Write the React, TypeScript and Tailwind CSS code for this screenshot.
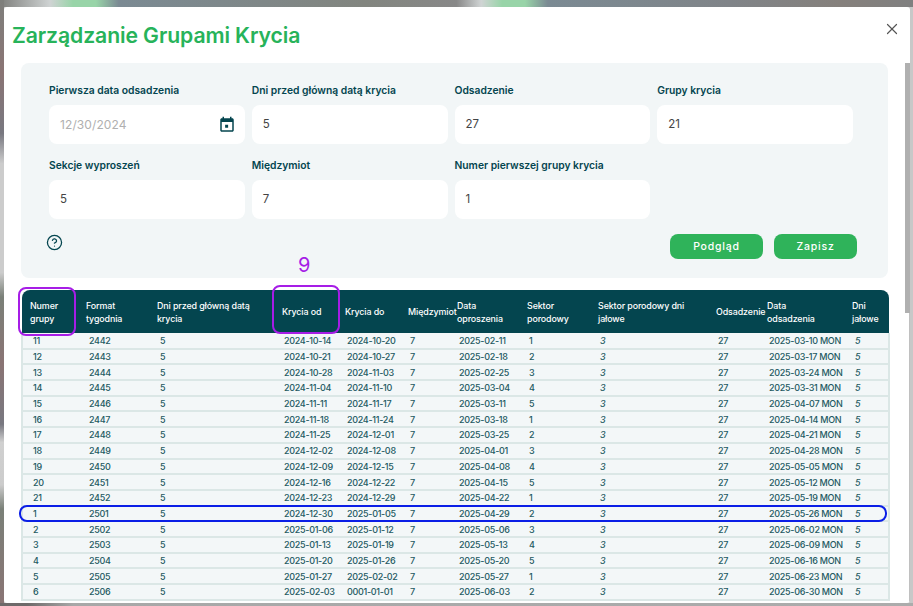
import React from 'react';
import { X, CircleHelp } from 'lucide-react';

const fieldsTop = [
  { label: 'Pierwsza data odsadzenia', value: '12/30/2024', date: true },
  { label: 'Dni przed główną datą krycia', value: '5' },
  { label: 'Odsadzenie', value: '27' },
  { label: 'Grupy krycia', value: '21' },
  { label: 'Sekcje wyproszeń', value: '5' },
  { label: 'Międzymiot', value: '7' },
  { label: 'Numer pierwszej grupy krycia', value: '1' },
];

const columns = [
  { title: 'Numer grupy', w: 'w-[56px]' },
  { title: 'Format tygodnia', w: 'w-[71px]' },
  { title: 'Dni przed główną datą krycia', w: 'w-[125px]' },
  { title: 'Krycia od', w: 'w-[63px]' },
  { title: 'Krycia do', w: 'w-[63px]' },
  { title: 'Międzymiot', w: 'w-[49px]' },
  { title: 'Data oproszenia', w: 'w-[70px]' },
  { title: 'Sektor porodowy', w: 'w-[71px]' },
  { title: 'Sektor porodowy dni jałowe', w: 'w-[118px]' },
  { title: 'Odsadzenie', w: 'w-[51px]' },
  { title: 'Data odsadzenia', w: 'w-[85px]' },
  { title: 'Dni jałowe', w: 'w-[45px]' },
];

const rows = [
  ['11', '2442', '2024-10-14', '2024-10-20', '2025-02-11', '1', '2025-03-10 MON'],
  ['12', '2443', '2024-10-21', '2024-10-27', '2025-02-18', '2', '2025-03-17 MON'],
  ['13', '2444', '2024-10-28', '2024-11-03', '2025-02-25', '3', '2025-03-24 MON'],
  ['14', '2445', '2024-11-04', '2024-11-10', '2025-03-04', '4', '2025-03-31 MON'],
  ['15', '2446', '2024-11-11', '2024-11-17', '2025-03-11', '5', '2025-04-07 MON'],
  ['16', '2447', '2024-11-18', '2024-11-24', '2025-03-18', '1', '2025-04-14 MON'],
  ['17', '2448', '2024-11-25', '2024-12-01', '2025-03-25', '2', '2025-04-21 MON'],
  ['18', '2449', '2024-12-02', '2024-12-08', '2025-04-01', '3', '2025-04-28 MON'],
  ['19', '2450', '2024-12-09', '2024-12-15', '2025-04-08', '4', '2025-05-05 MON'],
  ['20', '2451', '2024-12-16', '2024-12-22', '2025-04-15', '5', '2025-05-12 MON'],
  ['21', '2452', '2024-12-23', '2024-12-29', '2025-04-22', '1', '2025-05-19 MON'],
  ['1', '2501', '2024-12-30', '2025-01-05', '2025-04-29', '2', '2025-05-26 MON'],
  ['2', '2502', '2025-01-06', '2025-01-12', '2025-05-06', '3', '2025-06-02 MON'],
  ['3', '2503', '2025-01-13', '2025-01-19', '2025-05-13', '4', '2025-06-09 MON'],
  ['4', '2504', '2025-01-20', '2025-01-26', '2025-05-20', '5', '2025-06-16 MON'],
  ['5', '2505', '2025-01-27', '2025-02-02', '2025-05-27', '1', '2025-06-23 MON'],
  ['6', '2506', '2025-02-03', '0001-01-01', '2025-06-03', '2', '2025-06-30 MON'],
];

function CalendarIcon() {
  return (
    <svg viewBox="0 0 24 24" className="h-[18px] w-[18px] fill-[#04454f]">
      <path d="M19 3h-1V1h-2v2H8V1H6v2H5c-1.11 0-1.99.9-1.99 2L3 19c0 1.1.89 2 2 2h14c1.1 0 2-.9 2-2V5c0-1.1-.9-2-2-2zm0 16H5V8h14v11zM9.5 11.5h4v4h-4z" />
    </svg>
  );
}

function Field({ label, value, date }: { label: string; value: string; date?: boolean }) {
  return (
    <div className="flex flex-col">
      <label className="h-[22px] whitespace-nowrap text-[10.3px] font-semibold leading-[15px] text-[#04454f]">{label}</label>
      <div className="flex h-[39px] items-center justify-between rounded-lg bg-white pl-[11px] pr-[9px]">
        <span className={date ? 'text-[12px] tracking-[0.1px] text-[#b0b0b0]' : 'text-[11.5px] text-[#444]'}>{value}</span>
        {date && <CalendarIcon />}
      </div>
    </div>
  );
}

export default function App() {
  return (
    <div className="relative h-[606px] w-[913px] overflow-hidden bg-[#c8c8c8] pb-[3px] pl-[4px] pr-[3px] pt-[7px] [font-family:Inter,'Liberation_Sans',sans-serif]">
      {/* blurred page behind the dialog */}
      <div className="absolute inset-x-0 top-0 h-[7px] bg-[linear-gradient(90deg,#7e7f7c_0%,#cfd3d3_5.5%,#98d4a8_8%,#98d4a8_10.5%,#7b8a93_13%,#82857f_40%,#888888_50%,#d0d4d4_52.7%,#98d4a8_55%,#98d4a8_57.5%,#7b8a93_60%,#808488_80%,#85807c_92%,#808080_100%)]" />
      <div className="absolute bottom-0 left-0 top-0 w-[4px] bg-[linear-gradient(180deg,#7e7f7c_0%,#8a7474_12%,#787880_22%,#cccccc_27%,#cccccc_45%,#7a8078_49%,#8a7474_60%,#787880_70%,#d0d0d0_73%,#cccccc_80%,#7a8078_84%,#8a7474_100%)]" />
      <div className="absolute inset-x-0 bottom-0 h-[3px] bg-[linear-gradient(90deg,#6e6a6a_0%,#6e6a6a_3%,#a8a8a8_8%,#acacac_100%)]" />

      <div className="relative flex h-[596px] flex-col overflow-hidden rounded-[3px] bg-white pl-[17px] pr-[21px]">
        <div className="-ml-[9px] flex h-[56px] shrink-0 items-center justify-between pt-[2px]">
          <h1 className="text-[21.2px] font-semibold tracking-[-0.1px] text-[#27b35a]">Zarządzanie Grupami Krycia</h1>
          <button className="-mr-[12px] -mt-[14px] text-[#555]" aria-label="Zamknij">
            <X className="h-[18px] w-[18px]" strokeWidth={1.6} />
          </button>
        </div>

        <section className="h-[215px] w-[867px] shrink-0 rounded-lg bg-[#f2f6f7] pl-[28px] pt-[20px]">
          <div className="grid w-[804px] grid-cols-4 gap-x-[7px] gap-y-[14px]">
            {fieldsTop.map((f) => (
              <Field key={f.label} {...f} />
            ))}
          </div>
          <div className="mt-[15px] flex h-[26px] items-start justify-between pr-[31px]">
            <CircleHelp className="-ml-[3px] mt-[0px] h-[17px] w-[17px] text-[#04454f]" strokeWidth={1.8} />
            <div className="flex gap-[11px]">
              <button className="h-[25px] w-[93px] rounded-lg bg-[#2fb35a] text-[10.5px] font-medium tracking-[0.8px] text-white">Podgląd</button>
              <button className="h-[25px] w-[83px] rounded-lg bg-[#2fb35a] text-[10.5px] font-medium tracking-[0.8px] text-white">Zapisz</button>
            </div>
          </div>
        </section>

        <table className="mt-[12px] w-[867px] shrink-0 table-fixed border-collapse text-[9px] leading-[12px] tracking-[-0.3px] text-[#235a62]">
          <colgroup>
            {columns.map((c) => (
              <col key={c.title} className={c.w} />
            ))}
          </colgroup>
          <thead>
            <tr className="h-[43px] bg-[#04454f] text-white">
              {columns.map((c, i) => (
                <th
                  key={c.title}
                  className={`pl-[8px] text-left text-[8.9px] font-medium leading-[13px] tracking-[-0.1px] ${i === 0 ? 'rounded-tl-lg' : ''} ${i === 11 ? 'rounded-tr-lg' : ''} ${i === 5 || i === 9 ? 'whitespace-nowrap' : ''} ${i === 10 ? 'pr-[20px]' : ''}`}
                >
                  {c.title}
                </th>
              ))}
            </tr>
          </thead>
          <tbody>
            {rows.map((r) => (
              <tr key={r[0] + r[1]} className="h-[15.69px] border-b-[2px] border-[#dbe7e6] bg-[#f3f7f8] font-medium [&>td]:pt-px">
                <td className="border-l-[2px] border-[#dbe7e6] pl-[10px]">{r[0]}</td>
                <td className="pl-[11px]">{r[1]}</td>
                <td className="pl-[11px]">5</td>
                <td className="whitespace-nowrap pl-[10px]">{r[2]}</td>
                <td className="whitespace-nowrap pl-[10px]">{r[3]}</td>
                <td className="pl-[10px]">7</td>
                <td className="whitespace-nowrap pl-[10px]">{r[4]}</td>
                <td className="pl-[10px]">{r[5]}</td>
                <td className="pl-[10px] italic">3</td>
                <td className="pl-[10px]">27</td>
                <td className="whitespace-nowrap pl-[10px]">{r[6]}</td>
                <td className="border-r-[2px] border-[#dbe7e6] pl-[11px] italic">5</td>
              </tr>
            ))}
          </tbody>
        </table>

        <div className="absolute right-0 top-[56px] h-[250px] w-[5px] bg-[#b0b0b0]" />
        <div className="absolute bottom-0 right-0 top-[306px] w-px bg-[#c0c0c0]" />
      </div>

      {/* annotations drawn over the screenshot */}
      <div className="absolute left-[18px] top-[287px] h-[49px] w-[58px] rounded-lg border-2 border-[#a61de6]" />
      <div className="absolute left-[272px] top-[285px] h-[49px] w-[68px] rounded-lg border-2 border-[#a61de6]" />
      <div className="absolute left-[19px] top-[505px] h-[17px] w-[868px] rounded-lg border-2 border-[#0a1ee6]" />
      <span className="absolute left-[298px] top-[252px] text-[20px] leading-[26px] text-[#a61de6]">9</span>
    </div>
  );
}
